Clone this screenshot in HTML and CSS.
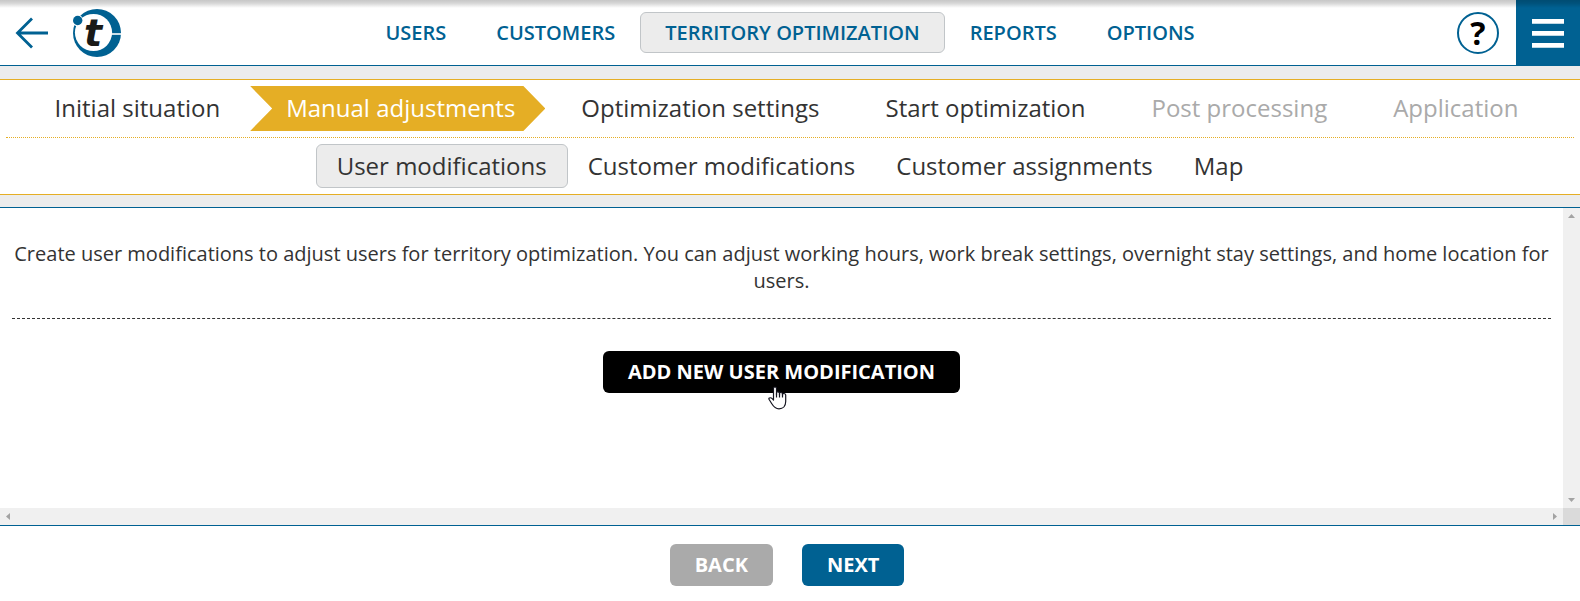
FILE: index.html
```html
<!DOCTYPE html>
<html lang="en">
<head>
<meta charset="utf-8">
<title>Territory optimization</title>
<link rel="stylesheet" href="styles.css">
</head>
<body>
<header class="topbar">
  <div class="topbar-start">
    <a class="icon-link" href="#" aria-label="Go back">
      <svg width="34" height="34" viewBox="0 0 34 34" fill="none" stroke="#006192" stroke-width="2.8"><path d="M17 2.500L2.500 17L17 31.500M2.500 17H33"/></svg>
    </a>
    <a class="icon-link" href="#" aria-label="Home">
      <svg width="48" height="48" viewBox="0 0 48 48">
        <circle cx="24" cy="24" r="24" fill="#006192"/>
        <circle cx="20.500" cy="23.500" r="18.600" fill="#fff"/>
        <path d="M38 25H48" stroke="#fff" stroke-width="1.600"/>
        <circle cx="4.500" cy="11.500" r="5.800" fill="#fff"/>
        <circle cx="4.700" cy="11.500" r="4.700" fill="#006192"/>
        <text class="logo-letter" x="11" y="37">t</text>
      </svg>
    </a>
  </div>
  <nav class="main-nav" aria-label="Main">
    <a class="main-link" href="#">USERS</a>
    <a class="main-link" href="#">CUSTOMERS</a>
    <a class="main-link is-active" href="#" aria-current="page">TERRITORY OPTIMIZATION</a>
    <a class="main-link" href="#">REPORTS</a>
    <a class="main-link" href="#">OPTIONS</a>
  </nav>
  <div class="topbar-end">
    <button class="help" type="button" aria-label="Help">?</button>
    <button class="menu" type="button" aria-label="Menu">
      <svg width="32" height="30" viewBox="0 0 32 30" fill="#fff"><path d="M0 1H32V5.700H0ZM0 13H32V17.700H0ZM0 25H32V29.700H0Z"/></svg>
    </button>
  </div>
</header>

<section class="wizard">
  <nav class="steps" aria-label="Steps">
    <a class="step" href="#">Initial situation</a>
    <a class="step is-active" href="#" aria-current="step">Manual adjustments</a>
    <a class="step" href="#">Optimization settings</a>
    <a class="step" href="#">Start optimization</a>
    <a class="step is-disabled" href="#" aria-disabled="true">Post processing</a>
    <a class="step is-disabled" href="#" aria-disabled="true">Application</a>
  </nav>
  <nav class="substeps" aria-label="Adjustments">
    <a class="substep is-active" href="#" aria-current="page">User modifications</a>
    <a class="substep" href="#">Customer modifications</a>
    <a class="substep" href="#">Customer assignments</a>
    <a class="substep" href="#">Map</a>
  </nav>
</section>

<main class="pane">
  <div class="content">
    <p class="intro">Create user modifications to adjust users for territory optimization. You can adjust working hours, work break settings, overnight stay settings, and home location for users.</p>
    <div class="add-wrap">
      <button class="btn btn-add" type="button">ADD NEW USER MODIFICATION</button>
      <svg class="pointer" width="19" height="24" viewBox="0 0 19 24" fill="#fff" stroke="#14141f" stroke-width="1.200" stroke-linejoin="round"><path d="M5.500 14V2.500Q5.500 1 7 1T8.500 2.500V9V7Q8.600 5.700 10 5.900T11.500 7.300V9V7.300Q11.700 6.300 13 6.500T14.500 8V9.500V8.300Q14.700 7.300 16 7.500T17.700 9V15.500C17.700 20 15 22.800 11 22.800C7 22.800 5.500 20.500 3.800 17.700L1 13.300Q.5 11.900 1.800 11.800Q3.200 11.600 4.200 12.700Z"/><path d="M8.500 7V11.500M11.500 7.500V11.500M14.500 8V11.500"/></svg>
    </div>
  </div>
  <div class="bar bar-v">
    <svg width="7" height="4" viewBox="0 0 7 4" fill="#a3a3a3"><path d="M0 4L3.500 0L7 4Z"/></svg>
    <svg width="7" height="4" viewBox="0 0 7 4" fill="#a3a3a3"><path d="M0 0L3.500 4L7 0Z"/></svg>
  </div>
  <div class="bar bar-h">
    <svg width="4" height="7" viewBox="0 0 4 7" fill="#a3a3a3"><path d="M4 0L0 3.500L4 7Z"/></svg>
    <svg width="4" height="7" viewBox="0 0 4 7" fill="#a3a3a3"><path d="M0 0L4 3.500L0 7Z"/></svg>
  </div>
  <div class="bar-corner"></div>
</main>

<footer class="actions">
  <button class="btn btn-back" type="button">BACK</button>
  <button class="btn btn-next" type="button">NEXT</button>
</footer>
</body>
</html>
```
FILE: styles.css
```css
:root {
  --blue: #006192;
  --gold: #e5ae25;
  --grey: #ececec;
  --ink: #333;
}

* {
  box-sizing: border-box;
}

body {
  margin: 0;
  min-height: 100vh;
  display: flex;
  flex-direction: column;
  background: #fff;
  color: var(--ink);
  font-family: "Open Sans", "Noto Sans", sans-serif;
  font-size: 20px;
}

a {
  color: inherit;
  text-decoration: none;
  white-space: nowrap;
}

button {
  border: 0;
  font: inherit;
  cursor: pointer;
}

svg {
  display: block;
}

/* Top bar */
.topbar {
  position: relative;
  display: grid;
  grid-template-columns: 1fr auto 1fr;
  border-bottom: 1px solid var(--blue);
}

.topbar::after {
  content: "";
  position: absolute;
  inset: 0 0 auto;
  height: 8px;
  background: linear-gradient(rgba(0, 0, 0, 0.22), rgba(0, 0, 0, 0.16) 40%, rgba(0, 0, 0, 0));
  pointer-events: none;
}

.topbar-start {
  display: flex;
  align-items: center;
  gap: 24px;
  padding-left: 15px;
}

.logo-letter {
  font: italic bold 38px "DejaVu Sans", sans-serif;
  fill: #1a1a18;
}

.main-nav {
  display: flex;
  padding: 12px 0;
}

.main-link {
  padding: 0 24px;
  border: 1px solid transparent;
  border-radius: 6px;
  color: var(--blue);
  font-weight: 600;
  line-height: 39px;
}

.main-link.is-active,
.substep.is-active {
  border-color: #c1c5c8;
  background: var(--grey);
}

.topbar-end {
  display: flex;
  align-items: center;
  justify-content: flex-end;
  gap: 17px;
}

.help {
  width: 42px;
  height: 42px;
  padding: 0;
  border: 2px solid var(--blue);
  border-radius: 50%;
  background: #fff;
  color: #000;
  font-size: 32px;
  font-weight: 700;
  line-height: 36px;
}

.menu {
  display: grid;
  place-items: center;
  align-self: stretch;
  width: 64px;
  padding: 0;
  background: var(--blue);
}

/* Wizard steps */
.wizard {
  padding: 0 6px;
  border-top: 1px solid var(--gold);
  border-bottom: 1px solid var(--gold);
  font-size: 24px;
  box-shadow: 0 -13px var(--grey), 0 12px var(--grey);
  margin: 13px 0 12px;
}

.steps {
  display: flex;
  justify-content: center;
  padding: 6px 13px 6px 0;
  border-bottom: 1px dotted var(--gold);
}

.step {
  padding: 0 30px 2px 36px;
  line-height: 43px;
}

.step.is-active {
  background: var(--gold);
  color: #fff;
  clip-path: polygon(0 0, calc(100% - 22px) 0, 100% 50%, calc(100% - 22px) 100%, 0 100%, 22px 50%);
}

.step.is-disabled {
  color: #aaa;
}

.substeps {
  display: flex;
  justify-content: center;
  padding: 6px 0;
}

.substep {
  padding: 0 20px;
  border: 1px solid transparent;
  border-radius: 6px;
  line-height: 42px;
}

.substep + .substep {
  margin-left: -1px;
}

/* Scrolling pane */
.pane {
  flex: 1;
  display: grid;
  grid-template: 1fr 17px / 1fr 17px;
  border-top: 1px solid var(--blue);
  border-bottom: 1px solid var(--blue);
}

.content {
  padding: 32px 12px 0;
  text-align: center;
}

.intro {
  margin: 0 0 32px;
  padding-bottom: 24px;
  border-bottom: 1px dashed var(--ink);
  line-height: 27px;
}

.add-wrap {
  position: relative;
  display: inline-block;
}

.pointer {
  position: absolute;
  top: 35px;
  left: 165px;
}

.bar {
  display: flex;
  align-items: center;
  justify-content: space-between;
  padding: 6px;
  background: #f0f0f0;
}

.bar-v {
  flex-direction: column;
}

.bar-corner {
  background: #dadada;
}

/* Buttons */
.btn {
  display: block;
  padding: 0 25px;
  border-radius: 6px;
  color: #fff;
  font-weight: 700;
  line-height: 42px;
}

.btn-add {
  background: #000;
}

.btn-back {
  background: #aaa;
}

.btn-next {
  background: var(--blue);
}

.actions {
  display: flex;
  justify-content: center;
  gap: 29px;
  padding: 18px 6px 15px 0;
}
```
